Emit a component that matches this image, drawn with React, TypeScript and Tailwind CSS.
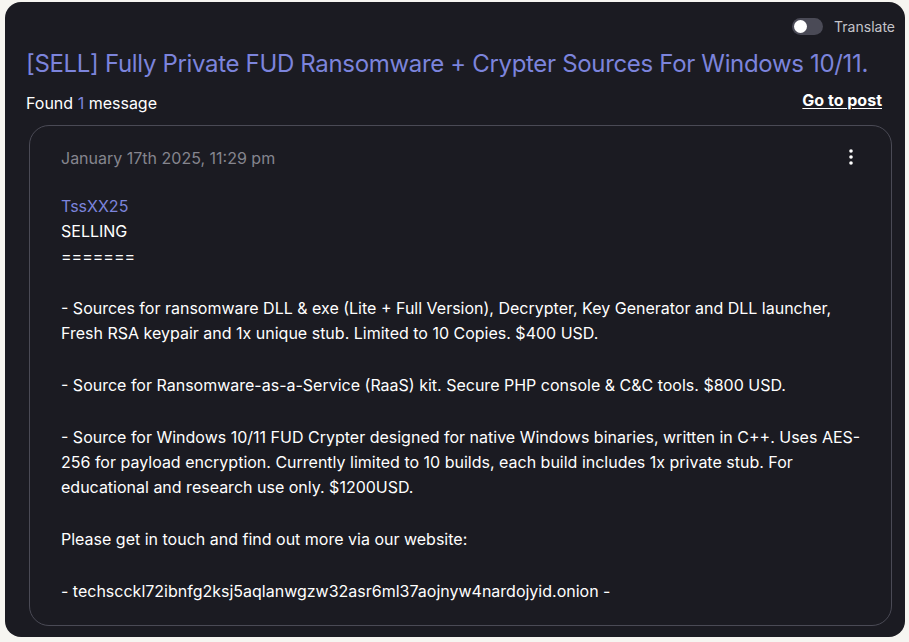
import { useState } from "react"

const paragraphs: string[][] = [
    [
        "- Sources for ransomware DLL & exe (Lite + Full Version), Decrypter, Key Generator and DLL launcher,",
        "Fresh RSA keypair and 1x unique stub. Limited to 10 Copies. $400 USD.",
    ],
    ["- Source for Ransomware-as-a-Service (RaaS) kit. Secure PHP console & C&C tools. $800 USD."],
    [
        "- Source for Windows 10/11 FUD Crypter designed for native Windows binaries, written in C++. Uses AES-",
        "256 for payload encryption. Currently limited to 10 builds, each build includes 1x private stub. For",
        "educational and research use only. $1200USD.",
    ],
    ["Please get in touch and find out more via our website:"],
    ["- techscckl72ibnfg2ksj5aqlanwgzw32asr6ml37aojnyw4nardojyid.onion -"],
]

export default function App() {
    const [translate, setTranslate] = useState(false)

    return (
        <div
            className="w-[909px] h-[642px] bg-[#f6f5f1] pt-[2px] pl-[5px]"
            style={{ fontFamily: "Inter, 'Noto Sans', sans-serif" }}
        >
            <div className="w-[900px] h-[635px] rounded-[16px] bg-[#1b1b22] pl-[21px] pr-[10px] pt-[13px]">
                {/* Translate toggle */}
                <div className="flex justify-end items-center gap-[11px] h-[22px]">
                    <button
                        onClick={() => setTranslate(!translate)}
                        className="w-[31px] h-[17px] rounded-full bg-[#4a4a56] flex items-center px-[2px]"
                    >
                        <span
                            className={
                                translate
                                    ? "w-[13px] h-[13px] rounded-full bg-white ml-auto"
                                    : "w-[13px] h-[13px] rounded-full bg-white"
                            }
                        />
                    </button>
                    <span className="text-[14px] text-[#c4c4ca]">Translate</span>
                </div>

                <h1 className="mt-[11px] text-[24px] leading-[32px] text-[#7c84dc] tracking-[-0.33px]">
                    [SELL] Fully Private FUD Ransomware + Crypter Sources For Windows 10/11.
                </h1>

                <div className="mt-[11px] flex items-center justify-between pr-[13px]">
                    <p className="text-[16px] leading-[24px] text-white">
                        Found <span className="text-[#7c84dc]">1</span> message
                    </p>
                    <a className="text-[16px] font-bold text-white underline underline-offset-2 -mt-[6px]">
                        Go to post
                    </a>
                </div>

                {/* Message card */}
                <div className="mt-[10px] ml-[3px] w-[863px] h-[501px] rounded-[20px] border border-[#4a4a55] pl-[31px] pr-[32px] pt-[20px]">
                    <div className="flex items-center justify-between">
                        <span className="text-[16px] leading-[24px] text-[#85858e]">
                            January 17th 2025, 11:29 pm
                        </span>
                        <svg width="20" height="20" viewBox="0 0 20 20" className="mr-[-2px] -mt-[2px]">
                            <circle cx="10" cy="4" r="1.8" fill="white" />
                            <circle cx="10" cy="10" r="1.8" fill="white" />
                            <circle cx="10" cy="16" r="1.8" fill="white" />
                        </svg>
                    </div>

                    <div className="mt-[24px] text-[16px] leading-[25px] text-white">
                        <div className="text-[#7c84dc]">TssXX25</div>
                        <div>SELLING</div>
                        <div className="mb-[27px]">=======</div>
                        {paragraphs.map((lines, i) => (
                            <p key={i} className="mb-[27px] whitespace-nowrap">
                                {lines.map((line, j) => (
                                    <span key={j} className="block">
                                        {line}
                                    </span>
                                ))}
                            </p>
                        ))}
                    </div>
                </div>
            </div>
        </div>
    )
}
